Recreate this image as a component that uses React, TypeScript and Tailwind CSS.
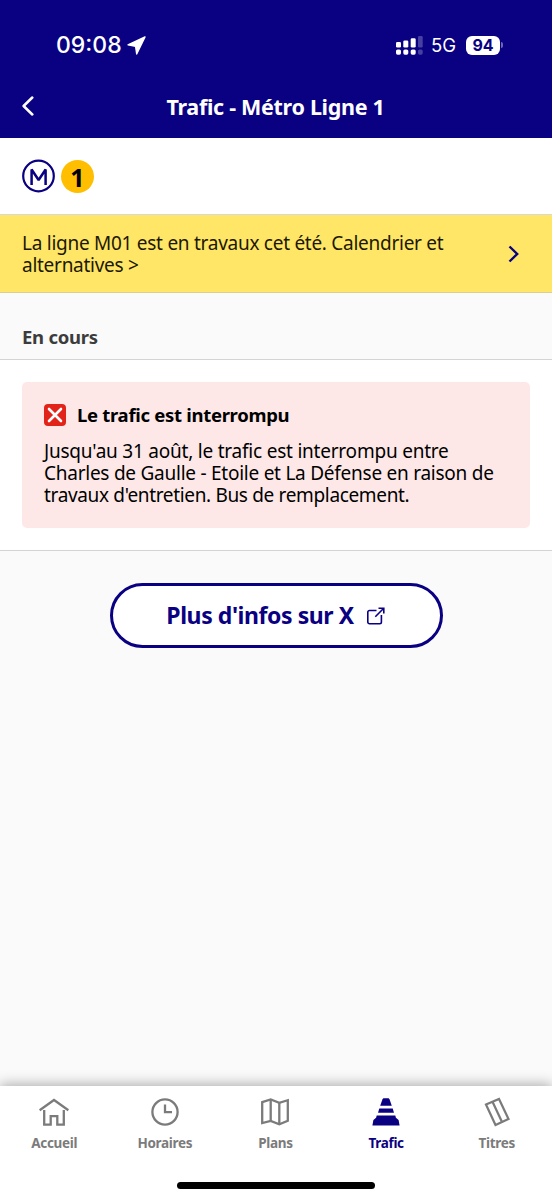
import React from 'react';

const tabs = [
  {
    label: 'Accueil',
    icon: (
      <svg viewBox="0 0 30 30" className="size-[30px]" fill="none" stroke="currentColor" strokeWidth="2.300">
        <path d="M.6 13.200 15 3l14.400 10.200" />
        <path d="M5.200 13v14.600h6.500v-8.500h6.600v8.500h6.500V13" />
      </svg>
    ),
  },
  {
    label: 'Horaires',
    icon: (
      <svg viewBox="0 0 30 30" className="size-[30px]" fill="none" stroke="currentColor" strokeWidth="2.300">
        <circle cx="15" cy="15" r="12.600" />
        <path d="M15 7.500v7.700h7" />
      </svg>
    ),
  },
  {
    label: 'Plans',
    icon: (
      <svg viewBox="0 0 30 30" className="size-[30px]" fill="none" stroke="currentColor" strokeWidth="2.300">
        <path d="M2.200 5.200 10.700 2.500l8.600 3.300 8.500-2.600v20.600l-8.500 3.500-8.600-3.300-8.500 2z" />
        <path d="M10.700 2.500V24M19.300 5.800v21.500" />
      </svg>
    ),
  },
  {
    label: 'Trafic',
    active: true,
    icon: (
      <svg viewBox="0 0 30 30" className="size-[30px]" fill="currentColor">
        <path d="M12.300 1.200h5.400l.9 1.200 2.200 6.300H9.200l2.200-6.300z" />
        <path d="M8.300 11.500h13.400l1.300 4.200H7z" />
        <path d="M5.700 18.400h18.600l.6 2.400 2.700 2.200 1 5.600H1.400l1-5.600 2.700-2.200z" />
      </svg>
    ),
  },
  {
    label: 'Titres',
    icon: (
      <svg viewBox="0 0 30 30" className="size-[30px]" fill="none" stroke="currentColor" strokeWidth="2.200">
        <path d="M4 7.500 17 2 26.500 22 13.500 28z" />
        <path d="M10.500 4.800 20 25" />
      </svg>
    ),
  },
];

const StatusBar = () => (
  <div className="flex h-[90px] items-center pl-[56px] pr-[49px] font-['Inter',sans-serif]">
    <span className="w-[66px] text-[23px] font-medium leading-[28px]">09:08</span>
    <svg viewBox="0 0 19 19" className="ml-[5px] size-[19px]" fill="currentColor" stroke="currentColor" strokeWidth="1.400" strokeLinejoin="round">
      <path d="M18 1 1 8.800 8.600 10.400 9.700 18z" />
    </svg>
    <svg viewBox="0 0 27 20" className="ml-auto h-[20px] w-[27px]" fill="currentColor">
      <rect x="0" y="7" width="5" height="5.500" rx="1.300" />
      <rect x="7.300" y="5.500" width="5" height="7" rx="1.300" />
      <rect x="14.700" y="3.200" width="5" height="9.300" rx="1.300" />
      <rect x="22" y="1" width="4.700" height="11.500" rx="1.300" opacity=".25" />
      <rect x="0" y="14.500" width="5" height="5.200" rx="1.600" />
      <rect x="7.300" y="14.500" width="5" height="5.200" rx="1.600" />
      <rect x="14.700" y="14.500" width="5" height="5.200" rx="1.600" />
      <rect x="22" y="14.500" width="4.700" height="5.200" rx="1.600" opacity=".25" />
    </svg>
    <span className="ml-[8px] w-[27px] text-[18.500px] leading-[24px]">5G</span>
    <span className="ml-[8px] flex h-[19px] w-[34px] items-center justify-center rounded-[6px] bg-white text-[16px] font-bold text-[#0a0082]">
      94
    </span>
    <span className="ml-[1px] h-[6px] w-[2px] rounded-r-full bg-white/40" />
  </div>
);

const TabBar = () => (
  <nav className="flex h-[114px] flex-col bg-white shadow-[0_-2px_12px_rgba(0,0,0,0.3)]">
    <div className="-ml-px grid h-[96px] grid-cols-5">
      {tabs.map((tab) => (
        <div
          key={tab.label}
          className={`flex flex-col items-center pt-[11px] ${tab.active ? 'text-[#0a0082]' : 'text-[#7b7b7b]'}`}
        >
          {tab.icon}
          <span className="mt-[6px] text-[13.500px] font-bold leading-[20px] tracking-[-0.300px]">{tab.label}</span>
        </div>
      ))}
    </div>
    <div className="mx-auto h-[7px] w-[198px] rounded-full bg-black" />
  </nav>
);

const App = () => {
  return (
    <div className="flex h-[1200px] w-[552px] flex-col overflow-hidden bg-[#fafafa] font-['Noto_Sans',sans-serif] text-black">
      <header className="h-[138px] bg-[#0a0082] text-white">
        <StatusBar />
        <div className="flex h-[34px] items-center px-[22px]">
          <svg viewBox="0 0 12 20" className="mb-[3px] h-[20px] w-[12px]" fill="none" stroke="currentColor" strokeWidth="2.500" strokeLinecap="round" strokeLinejoin="round">
            <path d="M10.300 1.500 1.600 10l8.700 8.500" />
          </svg>
          <h1 className="flex-1 pr-[13px] text-center text-[21.500px] font-bold leading-[34px] tracking-[-0.3px]">
            Trafic - Métro Ligne 1
          </h1>
        </div>
      </header>

      <section className="flex h-[77px] items-center gap-[5px] border-b border-[#d8d8d8] bg-white px-[22px]">
        <svg viewBox="0 0 34 34" className="size-[34px]" fill="none" stroke="#0a0082">
          <circle cx="16.500" cy="17" r="15.300" strokeWidth="2.200" />
          <path d="M9.600 26V10.500l7 10.500 7-10.500V26" strokeWidth="2.500" strokeLinejoin="bevel" />
        </svg>
        <span className="flex size-[33px] items-center justify-center rounded-full bg-[#ffbe00] pt-px text-[25px] font-bold leading-[32px]">1</span>
      </section>

      <section className="flex h-[78px] items-center border-b border-[#d9cf8f] bg-[#ffe666] pl-[22px] pr-[33px]">
        <p className="flex-1 whitespace-nowrap text-[19px] leading-[22px] tracking-[-0.27px] text-[#1c1803]">
          <span className="block">La ligne M01 est en travaux cet été. Calendrier et</span>
          <span className="block">alternatives &gt;</span>
        </p>
        <svg viewBox="0 0 11 18" className="h-[18px] w-[11px]" fill="none" stroke="#0a0082" strokeWidth="2.400">
          <path d="m1.500 1.500 7.700 7.500-7.700 7.500" />
        </svg>
      </section>

      <h2 className="h-[67px] border-b border-[#d4d4d4] px-[22px] pt-[33px] text-[18.500px] font-bold leading-[22px] tracking-[-0.250px] text-[#3c3c3c]">
        En cours
      </h2>

      <section className="h-[191px] border-b border-[#d4d4d4] bg-white px-[22px] py-[22px]">
        <div className="h-[146px] rounded-[5px] bg-[#fde8e7] px-[22px] pt-[22px]">
          <div className="flex items-center gap-[11px]">
            <svg viewBox="0 0 22 22" className="size-[22px]">
              <rect width="22" height="22" rx="4" fill="#e1231a" />
              <path d="m5 5 12 12M17 5 5 17" stroke="#fff" strokeWidth="2.600" strokeLinecap="round" />
            </svg>
            <h3 className="whitespace-nowrap text-[18.500px] font-bold leading-[22px] tracking-[-0.3px]">
              Le trafic est interrompu
            </h3>
          </div>
          <p className="mt-[14px] whitespace-nowrap text-[19px] leading-[22px]">
            <span className="block tracking-[-0.22px]">Jusqu'au 31 août, le trafic est interrompu entre</span>
            <span className="block tracking-[-0.25px]">Charles de Gaulle - Etoile et La Défense en raison de</span>
            <span className="block tracking-[-0.34px]">travaux d'entretien. Bus de remplacement.</span>
          </p>
        </div>
      </section>

      <main className="flex-1 pt-[32px]">
        <button className="mx-auto flex h-[65px] w-[333px] items-center justify-center gap-[13px] rounded-full border-[3px] border-[#0a0082] bg-white pr-px text-[23px] font-bold text-[#0a0082]">
          <span className="whitespace-nowrap tracking-[-0.43px]">Plus d'infos sur X</span>
          <svg viewBox="0 0 18 18" className="size-[18px]" fill="none" stroke="currentColor" strokeWidth="1.600">
            <path d="M9.500 3.500h-7A1.700 1.700 0 0 0 .8 5.200v9.900a1.700 1.700 0 0 0 1.700 1.700h10.200a1.700 1.700 0 0 0 1.700-1.700V8" />
            <path d="m8.300 9.700 8.200-8.200M11.500 1.200h5.300v5.300" />
          </svg>
        </button>
      </main>

      <TabBar />
    </div>
  );
};

export default App;
